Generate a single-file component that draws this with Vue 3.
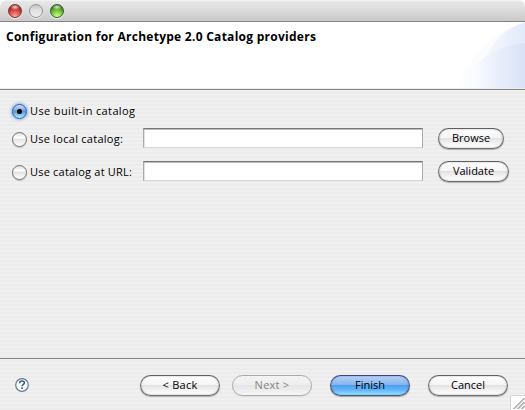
<script setup>
const lights = ['red', 'clear', 'green']
const choices = [
  { label: 'Use built-in catalog', key: 'builtin' },
  { label: 'Use local catalog:', key: 'local', action: 'Browse' },
  { label: 'Use catalog at URL:', key: 'url', action: 'Validate' },
]
</script>

<template>
  <div class="window">
    <header class="titlebar">
      <i v-for="l in lights" :key="l" class="light" :class="l"></i>
    </header>
    <section class="banner">
      <h1>Configuration for Archetype 2.0 Catalog providers</h1>
      <svg class="swoosh" width="75" height="66" viewBox="0 0 75 66">
        <defs>
          <linearGradient id="g1"><stop offset="0" stop-color="#fff" /><stop offset=".6" stop-color="#f9fbff" /><stop offset="1" stop-color="#eef3fc" /></linearGradient>
          <linearGradient id="g2"><stop offset="0" stop-color="#fafcff" /><stop offset="1" stop-color="#e2eaf9" /></linearGradient>
          <linearGradient id="g3"><stop offset="0" stop-color="#fff" /><stop offset=".3" stop-color="#f9fbff" /><stop offset=".5" stop-color="#eff3fd" /><stop offset="1" stop-color="#d9e1f5" /></linearGradient>
        </defs>
        <path d="M3 66C20 36 43 9 75 0V66Z" fill="url(#g1)" />
        <path d="M25 66C31 38 46 8 75 1V66Z" fill="url(#g2)" />
        <path d="M3 66C20 43 44 24 75 21V66Z" fill="url(#g3)" />
      </svg>
    </section>
    <main class="body">
      <div v-for="c in choices" :key="c.key" class="row" :class="c.key">
        <i class="radio"><b v-if="c.key === 'builtin'"></b></i>
        <span class="label"><span class="t">{{ c.label }}</span></span>
        <template v-if="c.action">
          <input class="field" type="text" />
          <button class="btn" :class="c.action.toLowerCase()"><span class="t">{{ c.action }}</span></button>
        </template>
      </div>
    </main>
    <footer class="footer">
      <svg class="help" width="16" height="16" viewBox="0 0 16 16">
        <circle cx="8" cy="8" r="6.3" fill="#fbfcff" stroke="#647897" stroke-width="1.2" />
        <path d="M5.7 6.2V5.7C5.8 4.5 6.8 4 8 4c1.4 0 2.4.6 2.4 1.8 0 1.6-2.2 1.5-2.3 3.4M8.1 10.3v1.7" fill="none" stroke="#435b8a" stroke-width="1.6" />
      </svg>
      <button class="btn back"><span class="t">&lt; Back</span></button>
      <button class="btn next" disabled><span class="t">Next &gt;</span></button>
      <button class="btn finish"><span class="t">Finish</span></button>
      <button class="btn cancel"><span class="t">Cancel</span></button>
      <svg class="grip" width="15" height="15" viewBox="0 0 15 15">
        <rect width="15" height="15" fill="#fff" />
        <path d="M.5 15V.5H15" fill="none" stroke="#d5d5d5" />
        <path d="M3.5 14L14.5 3M7.5 14L14.5 7M11.5 14L14.5 11" stroke="#6a6a6a" />
        <path d="M4.5 14L14.5 4M8.5 14L14.5 8M12.5 14L14.5 12" stroke="#bbb" />
      </svg>
    </footer>
  </div>
</template>

<style>
body { margin: 0; background: #fff; overflow: hidden; }
</style>

<style scoped>
.window {
  width: 525px; height: 410px; box-sizing: border-box; overflow: hidden;
  display: flex; flex-direction: column;
  border-radius: 7px 7px 0 0;
  font: 500 11px/14px "Open Sans", "Noto Sans", sans-serif; color: #000;
  background: repeating-linear-gradient(#ececec 0 2px, #f0f0f0 2px 4px);
}
.titlebar {
  height: 22px; box-sizing: border-box; flex: none; display: flex; gap: 7px; padding: 4px 0 0 8px;
  border-bottom: 1px solid #858585; border-radius: 7px 7px 0 0;
  background: linear-gradient(#f5f5f5 0, #e5e5e5 2px, #dedede 9px, #c9c9c9 100%);
}
.light {
  width: 14px; height: 14px; box-sizing: border-box; border-radius: 50%;
  border: 1px solid #5d3432; box-shadow: 0 1px 0 #eee;
}
.red { background: radial-gradient(ellipse 5px 3px at 50% 2px, #fffc, #fff0), radial-gradient(circle at 50% 95%, #ffaaa0, #dc4c47 45%, #751518 95%); border-color: #713936; }
.clear { background: linear-gradient(#c3c3c3, #e0e0e0 40%, #eee); border-color: #929292; }
.green { background: radial-gradient(ellipse 5px 3px at 50% 2px, #fffc, #fff0), radial-gradient(circle at 50% 95%, #d5ff8e, #75c83a 45%, #1b5208 95%); border-color: #365d2b; }
.banner {
  height: 68px; box-sizing: border-box; flex: none; background: #fff; border-bottom: 1px solid #858585;
  box-shadow: inset 0 -1px #eee; display: flex; justify-content: space-between;
}
.swoosh { flex: none; }
h1 { margin: 7px 0 0 6px; font-size: 12px; line-height: 16px; font-weight: 700; white-space: nowrap; letter-spacing: .27px; }
.body { height: 268px; box-sizing: border-box; flex: none; padding: 10px 0 0 12px; }
.row { display: flex; align-items: flex-start; height: 33px; }
.row.builtin { height: 28px; }
.radio {
  flex: none; width: 15px; height: 15px; box-sizing: border-box; margin: 4px 3px 0 0; border-radius: 50%;
  border: 1px solid #707070; background: linear-gradient(#ddd, #fff 35%, #e4e4e4 50%, #fff);
  box-shadow: 0 1px 1px #0003; display: grid; place-items: center;
}
.builtin .radio { border-color: #34509b; background: linear-gradient(#d4e2fb, #83afe9 35%, #5798e3 50%, #b5efff); box-shadow: 0 0 3px 1px #86b5e6; }
.radio b { width: 5px; height: 5px; border-radius: 50%; background: #000; }
.label { width: 113px; flex: none; white-space: nowrap; padding-top: 4px; }
.builtin .label .t { letter-spacing: .37px; }
.local .label .t { letter-spacing: .26px; }
.url .label .t { letter-spacing: .2px; }
.field {
  width: 280px; height: 20px; box-sizing: border-box; flex: none; margin: 0 15px 0 0; padding: 0; outline: 0;
  background: #fff; border: 1px solid #aaa; border-top-color: #777; border-bottom-color: #d5d5d5;
  box-shadow: inset 0 1px #bbb, inset 1px 0 #e2e2e2; border-radius: 0;
}
.btn {
  height: 21px; width: 80px; box-sizing: border-box; flex: none; padding: 0 0 1px; border-radius: 11px;
  border: 1px solid #6e6e6e; border-top-color: #606060; font: inherit; line-height: 18px; color: #000; white-space: nowrap;
  background: linear-gradient(#fff 0, #f5f5f5 45%, #e3e3e3 50%, #f3f3f3 75%, #fff);
  box-shadow: 0 1px 1px #0004, inset 0 0 2px #0005;
}
.browse { width: 66px; }
.validate { width: 71px; }
.footer {
  height: 52px; box-sizing: border-box; flex: none; border-top: 1px solid #858585;
  display: flex; align-items: flex-start; padding: 16px 0 0 14px;
}
.back .t, .next .t { letter-spacing: .25px; }
.help { margin: 2px 110px 0 0; flex: none; }
.next { margin: 0 18px 0 12px; color: #858585; border-color: #aaa; background: linear-gradient(#f3f3f3, #eee 45%, #e6e6e6 50%, #f5f5f5); box-shadow: 0 1px 1px #0001; }
.finish { border-color: #3c3d93 #4d5370 #4b5d73; background: linear-gradient(#b9d3f5 0, #86b5ee 45%, #4e9fee 50%, #65b7fb 75%, #95e8ff); box-shadow: 0 1px 1px #0005, inset 0 0 2px #2b50a988; }
.cancel { margin-left: 18px; }
.grip { margin: 20px 0 0 2px; flex: none; }
</style>
